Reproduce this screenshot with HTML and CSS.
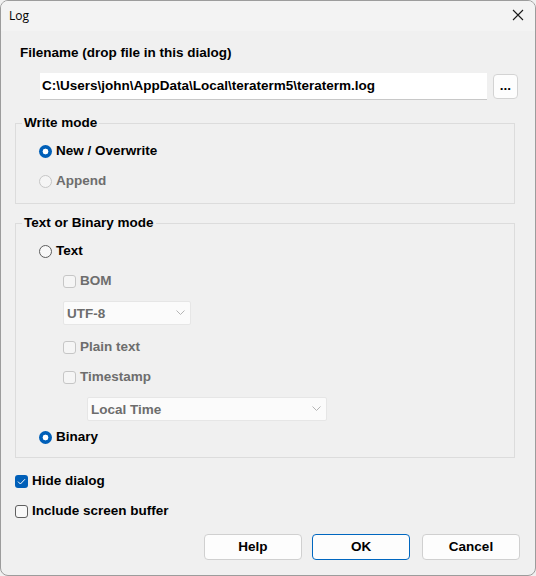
FILE: index.html
```html
<!DOCTYPE html>
<html>
<head>
<meta charset="utf-8">
<link rel="stylesheet" href="styles.css">
</head>
<body>
<div class="window">
  <div class="titlebar">
    <span class="title">Log</span>
    <svg class="close" width="12" height="12" viewBox="0 0 12 12"><path d="M1 1 L11 11 M11 1 L1 11" stroke="#1a1a1a" stroke-width="1.1" fill="none"/></svg>
  </div>
  <div class="content">
    <div class="label-filename">Filename (drop file in this dialog)</div>
    <div class="file-row">
      <div class="textbox">C:\Users\john\AppData\Local\teraterm5\teraterm.log</div>
      <div class="browse">...</div>
    </div>

    <fieldset class="group group-write">
      <legend>Write mode</legend>
      <div class="row ind1 first"><span class="radio checked"></span><span>New / Overwrite</span></div>
      <div class="row ind1 gap14 disabled"><span class="radio dis"></span><span>Append</span></div>
    </fieldset>

    <fieldset class="group group-mode">
      <legend>Text or Binary mode</legend>
      <div class="row ind1 first"><span class="radio"></span><span>Text</span></div>
      <div class="row ind2 gap14 disabled"><span class="check dis"></span><span>BOM</span></div>
      <div class="combo combo-enc"><span>UTF-8</span><svg width="9" height="6" viewBox="0 0 9 6"><path d="M0.5 0.5 L4.5 4.5 L8.5 0.5" stroke="#b4b4b4" fill="none"/></svg></div>
      <div class="row ind2 gap14 disabled"><span class="check dis"></span><span>Plain text</span></div>
      <div class="row ind2 gap14 disabled"><span class="check dis"></span><span>Timestamp</span></div>
      <div class="combo combo-time"><span>Local Time</span><svg width="9" height="6" viewBox="0 0 9 6"><path d="M0.5 0.5 L4.5 4.5 L8.5 0.5" stroke="#b4b4b4" fill="none"/></svg></div>
      <div class="row ind1 gap8"><span class="radio checked"></span><span>Binary</span></div>
    </fieldset>

    <div class="row opt-first"><span class="check checked"><svg width="9" height="7" viewBox="0 0 9 7"><path d="M1 3.6 L3.4 6 L8 1.2" stroke="#fff" stroke-width="1" fill="none"/></svg></span><span>Hide dialog</span></div>
    <div class="row gap14"><span class="check"></span><span>Include screen buffer</span></div>

    <div class="buttons">
      <div class="btn">Help</div>
      <div class="btn default">OK</div>
      <div class="btn cancel">Cancel</div>
    </div>
  </div>
</div>
</body>
</html>
```
FILE: styles.css
```css
html, body {
  margin: 0;
  padding: 0;
  background: #f0f0f0;
}
.window {
  width: 536px;
  height: 576px;
  box-sizing: border-box;
  border: 1px solid #9c9c9c;
  border-radius: 8px;
  background: #f0f0f0;
  overflow: hidden;
  font-family: "Liberation Sans", Arial, sans-serif;
  font-weight: bold;
  font-size: 13.5px;
  color: #000;
}
.titlebar {
  height: 30px;
  background: #f3f3f3;
  display: flex;
  align-items: center;
  justify-content: space-between;
  padding: 0 11px 0 8px;
}
.title {
  font-family: "Open Sans", "Noto Sans", sans-serif;
  font-weight: normal;
  font-size: 12px;
  margin-top: -2px;
}
.close {
  margin-top: -3px;
}
.content {
  padding: 0 15px 0 14px;
}
.label-filename {
  margin-top: 14px;
  margin-left: 5px;
  line-height: 16px;
}
.file-row {
  display: flex;
  align-items: center;
  margin-top: 12px;
  margin-left: 25px;
  gap: 6px;
}
.textbox {
  width: 447px;
  height: 27px;
  box-sizing: border-box;
  background: #fff;
  border-bottom: 1px solid #c8c8c8;
  padding-left: 2px;
  line-height: 26px;
}
.browse {
  width: 25px;
  height: 25px;
  box-sizing: border-box;
  background: #fdfdfd;
  border: 1px solid #d3d3d3;
  border-radius: 4px;
  text-align: center;
  line-height: 21px;
}
.group {
  width: 500px;
  box-sizing: border-box;
  margin: 0;
  border: 1px solid #dcdcdc;
  padding: 0 0 14px 0;
  min-width: 0;
}
.group legend {
  margin-left: 6px;
  padding: 0 2px;
  line-height: 16px;
}
.group-write {
  margin-top: 15px;
}
.group-mode {
  margin-top: 11px;
  padding-bottom: 12px;
}
.row {
  display: flex;
  align-items: center;
  height: 16px;
  line-height: 16px;
}
.ind1 { padding-left: 23px; }
.ind2 { padding-left: 47px; }
.first { margin-top: 12px; }
.gap14 { margin-top: 14px; }
.gap8 { margin-top: 8px; }
.disabled { color: #6d6d6d; }
.radio {
  width: 13px;
  height: 13px;
  box-sizing: border-box;
  border-radius: 50%;
  border: 1px solid #5c5c5c;
  background: #f8f8f8;
  margin-right: 4px;
  flex: none;
}
.radio.checked {
  border: none;
  background: radial-gradient(circle, #fff 0, #fff 2.6px, #005fb8 3.2px);
}
.radio.dis {
  border-color: #c6c6c6;
  background: #f5f5f5;
}
.check {
  width: 13px;
  height: 13px;
  box-sizing: border-box;
  border-radius: 3px;
  border: 1px solid #5f5f5f;
  background: #f8f8f8;
  margin-right: 4px;
  flex: none;
  display: flex;
  align-items: center;
  justify-content: center;
}
.check.dis {
  border-color: #c6c6c6;
  background: #f5f5f5;
}
.check.checked {
  border: none;
  background: #005fb8;
}
.combo {
  height: 24px;
  box-sizing: border-box;
  background: #fbfbfb;
  border: 1px solid #e6e6e6;
  border-radius: 2px;
  color: #6d6d6d;
  display: flex;
  align-items: center;
  justify-content: space-between;
  padding: 0 5px 0 3px;
}
.combo-enc {
  width: 128px;
  margin-left: 47px;
  margin-top: 12px;
}
.combo-time {
  width: 240px;
  margin-left: 71px;
  margin-top: 12px;
}
.opt-first { margin-top: 15px; }
.buttons {
  display: flex;
  justify-content: flex-end;
  margin-top: 15px;
}
.btn {
  width: 98px;
  height: 26px;
  box-sizing: border-box;
  background: #fdfdfd;
  border: 1px solid #d0d0d0;
  border-radius: 4px;
  text-align: center;
  line-height: 24px;
  margin-left: 10px;
}
.btn.default {
  border-color: #0067c0;
}
.btn.cancel {
  margin-left: 12px;
}
```
